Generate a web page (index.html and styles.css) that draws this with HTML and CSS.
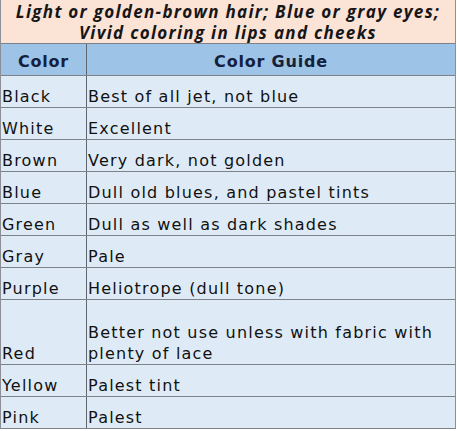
FILE: index.html
```html
<!DOCTYPE html>
<html>
<head>
<meta charset="utf-8">
<link rel="stylesheet" href="styles.css">
</head>
<body>
<div class="sheet">
  <div class="title">Light or golden-brown hair; Blue or gray eyes;<br>Vivid coloring in lips and cheeks</div>
  <div class="head">
    <div class="c1">Color</div>
    <div class="c2">Color Guide</div>
  </div>
  <div class="row"><div class="c1">Black</div><div class="c2">Best of all jet, not blue</div></div>
  <div class="row"><div class="c1">White</div><div class="c2">Excellent</div></div>
  <div class="row"><div class="c1">Brown</div><div class="c2">Very dark, not golden</div></div>
  <div class="row"><div class="c1">Blue</div><div class="c2">Dull old blues, and pastel tints</div></div>
  <div class="row"><div class="c1">Green</div><div class="c2">Dull as well as dark shades</div></div>
  <div class="row"><div class="c1">Gray</div><div class="c2">Pale</div></div>
  <div class="row"><div class="c1">Purple</div><div class="c2">Heliotrope (dull tone)</div></div>
  <div class="row tall"><div class="c1">Red</div><div class="c2">Better not use unless with fabric with plenty of lace</div></div>
  <div class="row"><div class="c1">Yellow</div><div class="c2">Palest tint</div></div>
  <div class="row"><div class="c1">Pink</div><div class="c2">Palest</div></div>
</div>
</body>
</html>
```
FILE: styles.css
```css
html, body {
  margin: 0;
  padding: 0;
  background: #ffffff;
}
.sheet {
  width: 456px;
  font-family: "DejaVu Sans", "Open Sans", sans-serif;
  color: #111111;
  border-left: 1px solid #8c9096;
  border-right: 1px solid #8c9096;
  box-sizing: border-box;
}
.title {
  height: 44px;
  background: #fbe3d6;
  border-bottom: 1px solid #7d8288;
  font-family: "Open Sans", "DejaVu Sans", sans-serif;
  font-weight: 700;
  font-style: italic;
  font-size: 17px;
  letter-spacing: 1.3px;
  line-height: 21px;
  text-align: center;
  color: #161616;
  padding-top: 1px;
  box-sizing: border-box;
  white-space: nowrap;
}
.head {
  display: grid;
  grid-template-columns: 86px 1fr;
  height: 32px;
  background: #9dc3e6;
  border-bottom: 1px solid #7d8288;
  box-sizing: border-box;
  font-weight: 700;
  font-size: 16px;
  letter-spacing: 0.8px;
  line-height: 20px;
  color: #14213d;
}
.head .c1, .head .c2 {
  display: flex;
  align-items: flex-end;
  justify-content: center;
  padding-bottom: 3px;
}
.head .c1 {
  border-right: 1px solid #5f6670;
}
.row {
  display: grid;
  grid-template-columns: 86px 1fr;
  height: 32px;
  background: #deebf7;
  border-bottom: 1px solid #7d8288;
  box-sizing: border-box;
  font-size: 16px;
  letter-spacing: 1.2px;
  line-height: 21px;
}
.row.tall {
  height: 65px;
}
.row .c1, .row .c2 {
  display: flex;
  align-items: flex-end;
  padding: 0 1px 0 1px;
}
.row .c1 {
  border-right: 1px solid #5f6670;
}
```
